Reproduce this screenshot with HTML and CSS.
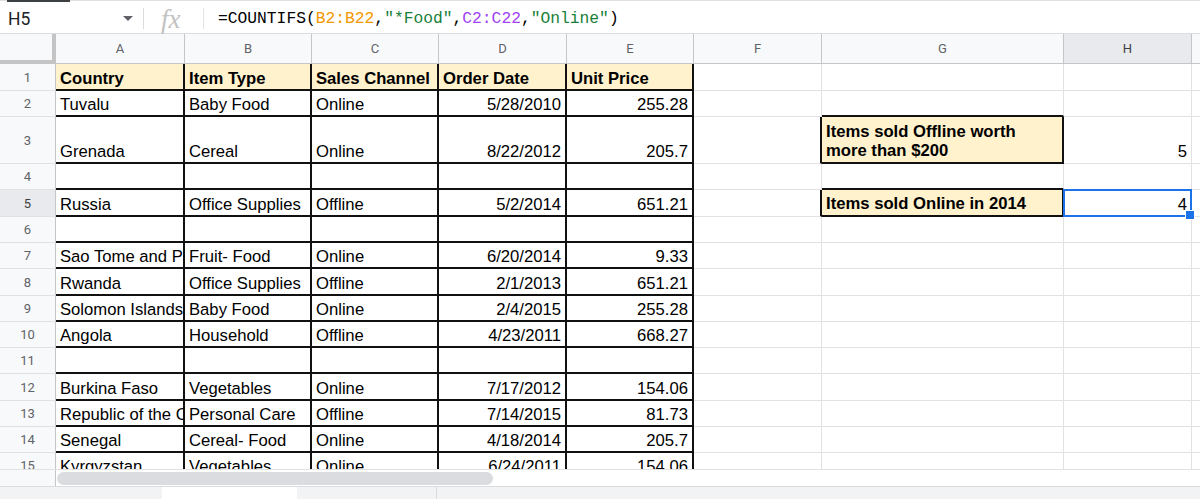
FILE: index.html
```html
<!DOCTYPE html>
<html lang="en">
<head>
<meta charset="utf-8">
<title>Sheet</title>
<link rel="stylesheet" href="styles.css">
</head>
<body>
<div class="fbar">
  <div class="namebox"><span>H5</span><span class="caret"></span></div>
  <div class="vsep"></div>
  <div class="fx">fx</div>
  <div class="vsep light"></div>
  <div class="formula">=COUNTIFS(<span class="ref1">B2:B22</span>,<span class="str">"*Food"</span>,<span class="ref2">C2:C22</span>,<span class="str">"Online"</span>)</div>
</div>

<div class="sheet">
  <div class="corner"></div>
  <div class="ch">A</div><div class="ch">B</div><div class="ch">C</div><div class="ch">D</div><div class="ch">E</div><div class="ch">F</div><div class="ch">G</div><div class="ch sel">H</div><div class="ch"></div>

  <div class="rh">1</div>
  <div class="c t hd">Country</div><div class="c t hd">Item Type</div><div class="c t hd">Sales Channel</div><div class="c t hd">Order Date</div><div class="c t hd">Unit Price</div>
  <div class="c"></div><div class="c"></div><div class="c"></div><div class="c"></div>

  <div class="rh">2</div>
  <div class="c t">Tuvalu</div><div class="c t">Baby Food</div><div class="c t">Online</div><div class="c t n">5/28/2010</div><div class="c t n">255.28</div>
  <div class="c"></div><div class="c bB"></div><div class="c"></div><div class="c"></div>

  <div class="rh">3</div>
  <div class="c t">Grenada</div><div class="c t">Cereal</div><div class="c t">Online</div><div class="c t n">8/22/2012</div><div class="c t n">205.7</div>
  <div class="c bR"></div><div class="c t box">Items sold Offline worth<br>more than $200</div><div class="c n">5</div><div class="c"></div>

  <div class="rh">4</div>
  <div class="c t"></div><div class="c t"></div><div class="c t"></div><div class="c t"></div><div class="c t"></div>
  <div class="c"></div><div class="c bB"></div><div class="c"></div><div class="c"></div>

  <div class="rh sel">5</div>
  <div class="c t">Russia</div><div class="c t">Office Supplies</div><div class="c t">Offline</div><div class="c t n">5/2/2014</div><div class="c t n">651.21</div>
  <div class="c bR"></div><div class="c t box">Items sold Online in 2014</div><div class="c n active">4<div class="selbox"><div class="handle"></div></div></div><div class="c"></div>

  <div class="rh">6</div>
  <div class="c t"></div><div class="c t"></div><div class="c t"></div><div class="c t"></div><div class="c t"></div>
  <div class="c"></div><div class="c"></div><div class="c"></div><div class="c"></div>

  <div class="rh">7</div>
  <div class="c t">Sao Tome and Principe</div><div class="c t">Fruit- Food</div><div class="c t">Online</div><div class="c t n">6/20/2014</div><div class="c t n">9.33</div>
  <div class="c"></div><div class="c"></div><div class="c"></div><div class="c"></div>

  <div class="rh">8</div>
  <div class="c t">Rwanda</div><div class="c t">Office Supplies</div><div class="c t">Offline</div><div class="c t n">2/1/2013</div><div class="c t n">651.21</div>
  <div class="c"></div><div class="c"></div><div class="c"></div><div class="c"></div>

  <div class="rh">9</div>
  <div class="c t">Solomon Islands</div><div class="c t">Baby Food</div><div class="c t">Online</div><div class="c t n">2/4/2015</div><div class="c t n">255.28</div>
  <div class="c"></div><div class="c"></div><div class="c"></div><div class="c"></div>

  <div class="rh">10</div>
  <div class="c t">Angola</div><div class="c t">Household</div><div class="c t">Offline</div><div class="c t n">4/23/2011</div><div class="c t n">668.27</div>
  <div class="c"></div><div class="c"></div><div class="c"></div><div class="c"></div>

  <div class="rh">11</div>
  <div class="c t"></div><div class="c t"></div><div class="c t"></div><div class="c t"></div><div class="c t"></div>
  <div class="c"></div><div class="c"></div><div class="c"></div><div class="c"></div>

  <div class="rh">12</div>
  <div class="c t">Burkina Faso</div><div class="c t">Vegetables</div><div class="c t">Online</div><div class="c t n">7/17/2012</div><div class="c t n">154.06</div>
  <div class="c"></div><div class="c"></div><div class="c"></div><div class="c"></div>

  <div class="rh">13</div>
  <div class="c t">Republic of the Congo</div><div class="c t">Personal Care</div><div class="c t">Offline</div><div class="c t n">7/14/2015</div><div class="c t n">81.73</div>
  <div class="c"></div><div class="c"></div><div class="c"></div><div class="c"></div>

  <div class="rh">14</div>
  <div class="c t">Senegal</div><div class="c t">Cereal- Food</div><div class="c t">Online</div><div class="c t n">4/18/2014</div><div class="c t n">205.7</div>
  <div class="c"></div><div class="c"></div><div class="c"></div><div class="c"></div>

  <div class="rh">15</div>
  <div class="c t">Kyrgyzstan</div><div class="c t">Vegetables</div><div class="c t">Online</div><div class="c t n">6/24/2011</div><div class="c t n">154.06</div>
  <div class="c"></div><div class="c"></div><div class="c"></div><div class="c"></div>
</div>

<div class="scroll">
  <div class="scorner"></div>
  <div class="thumb"></div>
</div>
<div class="tabs">
  <div class="tab"></div>
  <div class="tabsep"></div>
</div>
</body>
</html>
```

FILE: styles.css
```css
* { box-sizing: border-box; margin: 0; padding: 0; }
html, body { width: 1200px; height: 499px; overflow: hidden; background: #fff; }
body {
  font-family: "Liberation Sans", Arial, sans-serif;
  color: #000;
  display: flex;
  flex-direction: column;
}

/* formula bar */
.fbar {
  position: relative;
  flex: none;
  height: 34px;
  border-top: 1px solid #e0e0e0;
  border-bottom: 1px solid #dadce0;
  padding-top: 3px;
  display: flex;
  align-items: center;
}
.fbar::before {
  content: "";
  position: absolute;
  left: 7px;
  top: -1px;
  width: 63px;
  height: 2px;
  background: #3c4043;
}
.namebox {
  width: 143px;
  flex: none;
  display: flex;
  align-items: center;
  justify-content: space-between;
  padding: 0 10px 0 8px;
  font-family: Roboto, "Liberation Sans", sans-serif;
  font-size: 17.5px;
  color: #202124;
}
.caret {
  width: 0;
  height: 0;
  border-left: 5px solid transparent;
  border-right: 5px solid transparent;
  border-top: 5px solid #5f6368;
}
.vsep { width: 1px; height: 21px; background: #dadce0; flex: none; }
.vsep.light { background: #e3e3e3; }
.fx {
  width: 59px;
  flex: none;
  padding-left: 17px;
  font-family: "Liberation Serif", serif;
  font-style: italic;
  font-size: 27px;
  color: #c2c2c2;
  line-height: 26px;
}
.formula {
  padding-left: 14px;
  font-family: "Liberation Mono", monospace;
  font-size: 16.3px;
  color: #000;
  white-space: pre;
}
.ref1 { color: #f29900; }
.str { color: #188038; }
.ref2 { color: #a142f4; }

/* grid */
.sheet {
  flex: none;
  height: 435px;
  overflow: hidden;
  display: grid;
  grid-template-columns: 56px 129px 127px 127px 128px 127px 128px 242px 128px 1fr;
  grid-template-rows: 30px 27px 26px 47px 26px 27px 26px 26px 27px 26px 26px 26px 27px 26px 26px 26px;
}
.corner {
  background: #f8f9fa;
  border-right: 4px solid #c4c4c4;
  border-bottom: 4px solid #c4c4c4;
}
.ch {
  background: #f8f9fa;
  border-right: 1px solid #c4c7c5;
  border-bottom: 1px solid #c4c7c5;
  display: flex;
  align-items: center;
  justify-content: center;
  font-family: Roboto, "Liberation Sans", sans-serif;
  font-size: 13px;
  color: #5f6368;
}
.rh {
  background: #f8f9fa;
  border-right: 1px solid #c4c7c5;
  border-bottom: 1px solid #e1e1e1;
  display: flex;
  align-items: center;
  justify-content: center;
  font-family: Roboto, "Liberation Sans", sans-serif;
  font-size: 13px;
  color: #5f6368;
}
.sel { background: #e8eaed; color: #3c4043; }

.c {
  background: #fff;
  border-right: 1px solid #e2e2e2;
  border-bottom: 1px solid #e2e2e2;
  display: flex;
  align-items: flex-end;
  padding: 0 4px 2px 4px;
  overflow: hidden;
  white-space: nowrap;
  font-size: 16.67px;
  line-height: 19px;
}
.t { border-right: 2px solid #111; border-bottom: 2px solid #111; padding-bottom: 1px; }
.n { justify-content: flex-end; }
.hd { background: #fff2cc; font-weight: bold; }
.box { background: #fff2cc; font-weight: bold; white-space: normal; padding-bottom: 2px; }
.bB { border-bottom: 2px solid #111; }
.bR { border-right: 2px solid #111; }

.active { position: relative; overflow: visible; }
.selbox {
  position: absolute;
  top: -1px;
  left: -1px;
  right: -1px;
  bottom: -1px;
  border: 2px solid #1a73e8;
}
.handle {
  position: absolute;
  right: -5px;
  bottom: -5px;
  width: 10px;
  height: 10px;
  background: #1a73e8;
  border: 1px solid #fff;
}

/* bottom */
.scroll {
  flex: none;
  height: 17px;
  border-top: 1px solid #e2e2e2;
  display: flex;
}
.scorner { width: 56px; flex: none; background: #f8f9fa; border-right: 1px solid #c4c7c5; }
.thumb {
  margin: 2px 0 0 1px;
  width: 436px;
  height: 13px;
  border-radius: 7px;
  background: #dadce0;
}
.tabs {
  flex: none;
  height: 13px;
  border-top: 1px solid #dadce0;
  background: #f1f3f4;
  display: flex;
}
.tab { margin-left: 162px; width: 135px; background: #fff; }
.tabsep { margin-left: 139px; width: 1px; background: #dadce0; }
```
